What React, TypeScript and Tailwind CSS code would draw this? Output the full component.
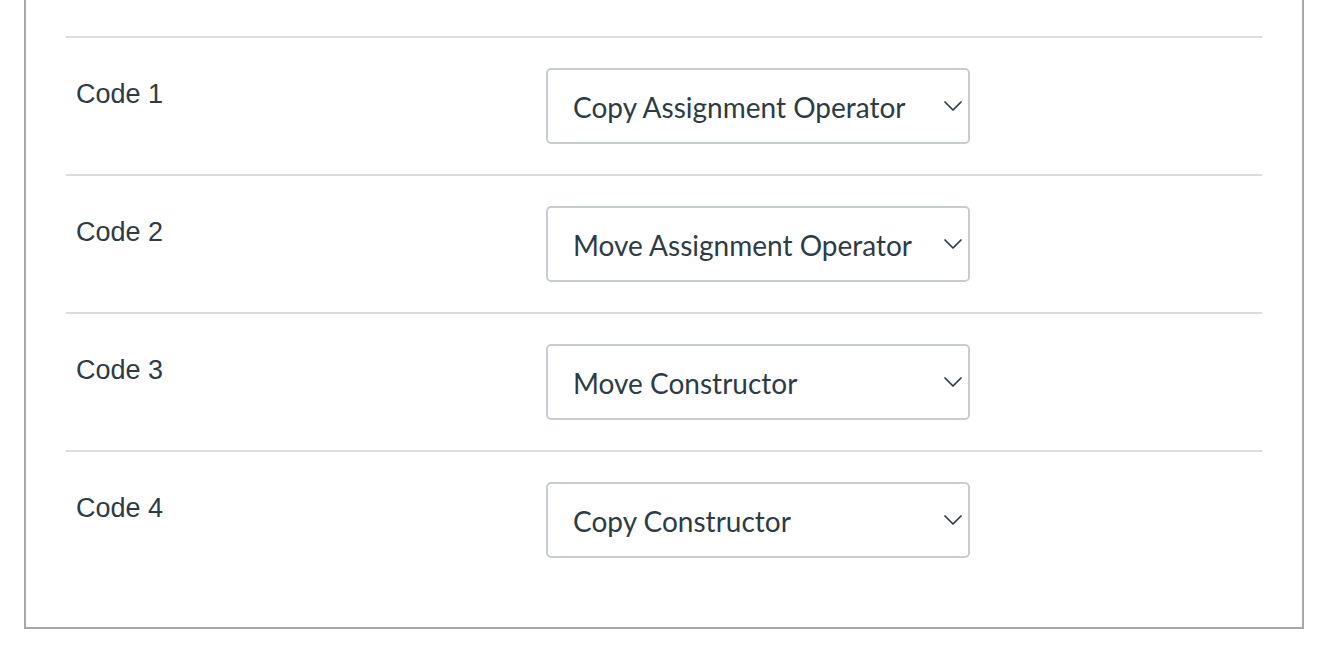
import React from "react";

const rows = [
  { label: "Code 1", value: "Copy Assignment Operator" },
  { label: "Code 2", value: "Move Assignment Operator" },
  { label: "Code 3", value: "Move Constructor" },
  { label: "Code 4", value: "Copy Constructor" },
];

function Chevron() {
  return (
    <svg width="18" height="10" viewBox="0 0 18 10" fill="none" className="shrink-0">
      <path d="M1 1 L9 9 L17 1" stroke="#2d3b45" strokeWidth="1.75" strokeLinecap="round" strokeLinejoin="round" />
    </svg>
  );
}

export default function App() {
  return (
    <div className="min-h-screen bg-white">
      <div className="ml-[24px] w-[1280px] -mt-[40px] border-2 border-[#a8a8a8] bg-white px-[40px] pt-[74px] pb-[69px]">
        {rows.map((r) => (
          <div key={r.label} className="flex border-t-2 border-[#dcdcdc] pt-[30px] pb-[30px] last:pb-0">
            <div
              className="w-[480px] shrink-0 pl-[10px] pt-[11px] text-[27px] leading-[30px] text-[#2d3b45]"
              style={{ fontFamily: '"Liberation Sans", Arial, sans-serif' }}
            >
              {r.label}
            </div>
            <div className="flex h-[76px] w-[424px] items-center justify-between rounded-[5px] border-2 border-[#c7cdd1] bg-white pl-[25px] pr-[6px]">
              <span
                className="pt-[1px] text-[28px] leading-[32px] text-[#2d3b45]"
                style={{ fontFamily: 'Lato, "Noto Sans", sans-serif' }}
              >
                {r.value}
              </span>
              <Chevron />
            </div>
          </div>
        ))}
      </div>
    </div>
  );
}
